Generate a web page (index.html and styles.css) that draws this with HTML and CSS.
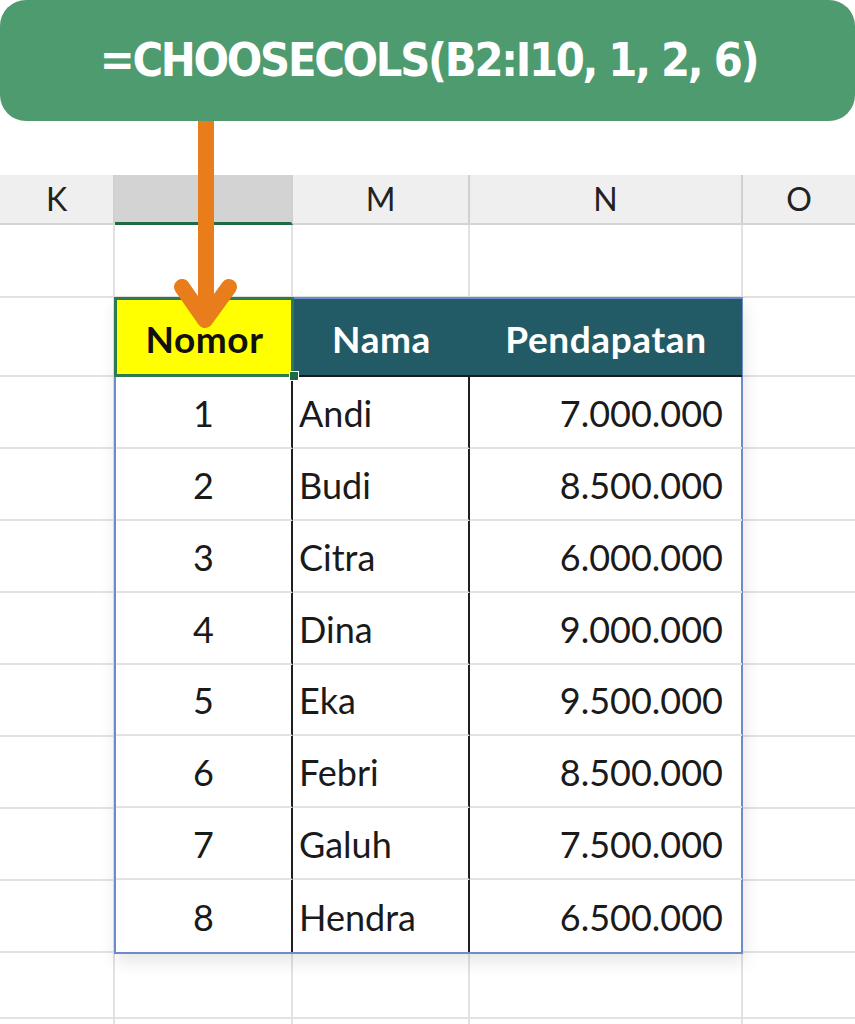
FILE: index.html
```html
<!DOCTYPE html>
<html lang="id">
<head>
<meta charset="utf-8">
<title>CHOOSECOLS</title>
<link rel="stylesheet" href="styles.css">
</head>
<body>
<div class="page">
  <div class="banner"><span class="formula">=CHOOSECOLS(B2:I10, 1, 2, 6)</span></div>
  <div class="spacer"></div>
  <div class="col-headers">
    <div class="ch">K</div>
    <div class="ch ch-sel"></div>
    <div class="ch">M</div>
    <div class="ch">N</div>
    <div class="ch ch-last">O</div>
  </div>
  <div class="sheet">
    <div class="gc"></div><div class="gc"></div><div class="gc"></div><div class="gc"></div><div class="gc gc-last"></div>

    <div class="gc side-l" style="grid-row: 2"></div><div class="gc gc-last side-r" style="grid-row: 2"></div>
    <div class="gc side-l" style="grid-row: 3"></div><div class="gc gc-last side-r" style="grid-row: 3"></div>
    <div class="gc side-l" style="grid-row: 4"></div><div class="gc gc-last side-r" style="grid-row: 4"></div>
    <div class="gc side-l" style="grid-row: 5"></div><div class="gc gc-last side-r" style="grid-row: 5"></div>
    <div class="gc side-l" style="grid-row: 6"></div><div class="gc gc-last side-r" style="grid-row: 6"></div>
    <div class="gc side-l" style="grid-row: 7"></div><div class="gc gc-last side-r" style="grid-row: 7"></div>
    <div class="gc side-l" style="grid-row: 8"></div><div class="gc gc-last side-r" style="grid-row: 8"></div>
    <div class="gc side-l" style="grid-row: 9"></div><div class="gc gc-last side-r" style="grid-row: 9"></div>
    <div class="gc side-l" style="grid-row: 10"></div><div class="gc gc-last side-r" style="grid-row: 10"></div>

    <div class="gc" style="grid-row: 11"></div><div class="gc" style="grid-row: 11"></div><div class="gc" style="grid-row: 11"></div><div class="gc" style="grid-row: 11"></div><div class="gc gc-last" style="grid-row: 11"></div>
    <div class="gc" style="grid-row: 12"></div><div class="gc" style="grid-row: 12"></div><div class="gc" style="grid-row: 12"></div><div class="gc" style="grid-row: 12"></div><div class="gc gc-last" style="grid-row: 12"></div>

    <div class="data-table">
      <div class="th th-sel">Nomor<span class="handle"></span></div>
      <div class="th">Nama</div>
      <div class="th">Pendapatan</div>

      <div class="td num">1</div><div class="td name">Andi</div><div class="td money">7.000.000</div>
      <div class="td num">2</div><div class="td name">Budi</div><div class="td money">8.500.000</div>
      <div class="td num">3</div><div class="td name">Citra</div><div class="td money">6.000.000</div>
      <div class="td num">4</div><div class="td name">Dina</div><div class="td money">9.000.000</div>
      <div class="td num">5</div><div class="td name">Eka</div><div class="td money">9.500.000</div>
      <div class="td num">6</div><div class="td name">Febri</div><div class="td money">8.500.000</div>
      <div class="td num">7</div><div class="td name">Galuh</div><div class="td money">7.500.000</div>
      <div class="td num last">8</div><div class="td name last">Hendra</div><div class="td money last">6.500.000</div>
    </div>
  </div>

  <svg class="arrow" width="80" height="210" viewBox="0 0 80 210" aria-hidden="true">
    <line x1="40" y1="0" x2="40" y2="194" stroke="#E97D1B" stroke-width="16" stroke-linecap="butt"/>
    <polyline points="16,166 39,199 63,166" fill="none" stroke="#E97D1B" stroke-width="16" stroke-linecap="round" stroke-linejoin="round"/>
  </svg>
</div>
</body>
</html>
```
FILE: styles.css
```css
* { box-sizing: border-box; }

html, body {
  margin: 0;
  padding: 0;
  background: #ffffff;
}

.page {
  position: relative;
  width: 855px;
  height: 1024px;
  overflow: hidden;
  background: #ffffff;
  font-family: "Lato", "Open Sans", sans-serif;
}

.banner {
  height: 121px;
  background: #4E9B6F;
  border-radius: 26px;
  display: flex;
  align-items: center;
  justify-content: center;
  position: relative;
  z-index: 2;
}

.formula {
  color: #ffffff;
  font-family: "DejaVu Sans Condensed", "DejaVu Sans", sans-serif;
  font-stretch: condensed;
  font-weight: bold;
  font-size: 46.5px;
  letter-spacing: -2.3px;
  padding-bottom: 2px;
  padding-left: 2px;
}

.spacer { height: 54px; }

.col-headers {
  display: grid;
  grid-template-columns: 115px 178px 177px 273px 112px;
  height: 50px;
  background: #EFEFEF;
  border-bottom: 2px solid #D4D4D4;
}

.ch {
  display: flex;
  align-items: center;
  justify-content: center;
  border-right: 2px solid #D0D0D0;
  font-size: 32px;
  color: #222222;
  padding-bottom: 2px;
}

.ch-last { border-right: none; }

.ch-sel {
  background: #D3D3D3;
  border-bottom: 3px solid #1E6B41;
  margin-bottom: -2px;
}

.sheet {
  display: grid;
  grid-template-columns: 115px 178px 177px 273px 112px;
  grid-template-rows: 73px 79px repeat(8, 72px) 66px 72px;
}

.gc {
  border-right: 2px solid #E2E2E2;
  border-bottom: 2px solid #E2E2E2;
}

.gc-last { border-right: none; }

.side-l { grid-column: 1; }
.side-r { grid-column: 5; }

.data-table {
  grid-column: 2 / 5;
  grid-row: 2 / 11;
  display: grid;
  grid-template-columns: 177px 177px 272px;
  grid-template-rows: 78px repeat(8, 1fr);
  border: 2px solid #6A8CCB;
  margin-left: -1px;
  margin-top: -1px;
  margin-bottom: -1px;
  box-shadow: 2px 8px 16px rgba(0, 0, 0, 0.10);
  position: relative;
  background: #ffffff;
}

.th {
  background: #225B66;
  color: #ffffff;
  font-weight: bold;
  font-size: 37px;
  letter-spacing: 0.6px;
  display: flex;
  align-items: center;
  justify-content: center;
  border-bottom: 2px solid #1b1b1b;
  padding-top: 3px;
}

.th-sel {
  background: #FFFF00;
  color: #111111;
  position: relative;
}

.th-sel::after {
  content: "";
  position: absolute;
  inset: -2px -1px -2px -2px;
  border: 3px solid #2E7A4C;
  pointer-events: none;
}

.handle {
  position: absolute;
  right: -6px;
  bottom: -6px;
  width: 10px;
  height: 10px;
  background: #1E6B41;
  border: 1px solid #ffffff;
  z-index: 3;
}

.td {
  display: flex;
  align-items: center;
  font-size: 36px;
  color: #1a1a1a;
  border-bottom: 2px solid #E2E2E2;
  padding-top: 2px;
}

.td.last { border-bottom: none; }

.num {
  justify-content: center;
  border-right: 2px solid #1f1f1f;
}

.name {
  padding-left: 6px;
  border-right: 2px solid #1f1f1f;
}

.money {
  justify-content: flex-end;
  padding-right: 19px;
}

.arrow {
  position: absolute;
  left: 166px;
  top: 121px;
  z-index: 3;
}
```
